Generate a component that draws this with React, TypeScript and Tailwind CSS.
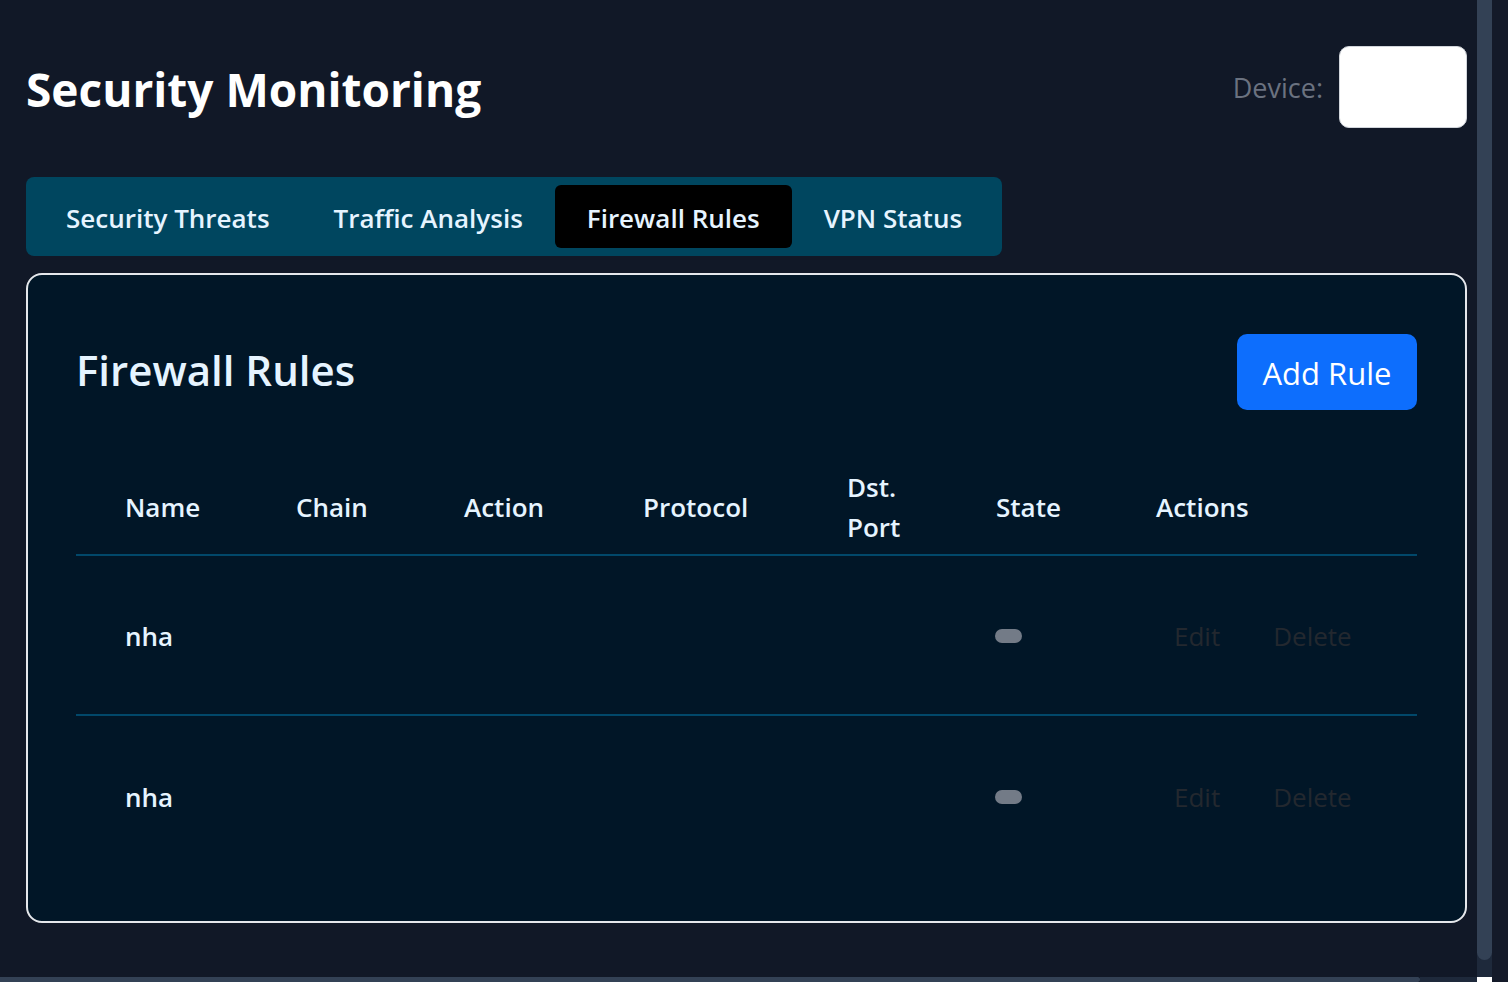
import React from "react";

const font = { fontFamily: '"Open Sans", "Noto Sans", sans-serif' };

const tabs = ["Security Threats", "Traffic Analysis", "Firewall Rules", "VPN Status"];
const cols = ["Name", "Chain", "Action", "Protocol", "Dst. Port", "State", "Actions"];
const grid = "grid grid-cols-[171px_168px_179px_204px_149px_160px_1fr]";

function Row({ last }: { last?: boolean }) {
  return (
    <div className={`${grid} h-[160px] items-center ${last ? "" : "border-b-2 border-[#01486a]"}`}>
      <div className="pl-[49px] pt-[2px] text-[26px] font-semibold text-[#e6f4ff]">nha</div>
      <div />
      <div />
      <div />
      <div />
      <div className="pl-[48px] pt-[2px]">
        <div className="h-[14px] w-[27px] rounded-full bg-[#737b87]" />
      </div>
      <div className="flex pl-[67px] pt-[2px] text-[26px] text-[#23282f]">
        <span>Edit</span>
        <span className="ml-[53px]">Delete</span>
      </div>
    </div>
  );
}

export default function App() {
  return (
    <div style={font} className="flex h-[982px] w-[1508px] overflow-hidden bg-[#111827]">
      <div className="flex w-[1477px] flex-col">
        <div className="flex-1 pl-[26px] pr-[10px] pt-[46px]">
          <div className="flex h-[82px] items-center justify-between">
            <h1 className="pt-[5px] text-[46px] font-bold text-white">Security Monitoring</h1>
            <div className="flex items-center gap-[16px]">
              <span className="pt-[3px] text-[27px] text-[#6b7280]">Device:</span>
              <div className="h-[82px] w-[128px] rounded-[10px] border border-[#d1d5db] bg-white" />
            </div>
          </div>
          <div className="mt-[49px] inline-flex h-[79px] items-center rounded-[8px] bg-[#00465f] p-[8px]">
            {tabs.map((t) => (
              <div
                key={t}
                className={`flex h-[63px] items-center rounded-[6px] px-[32px] pt-[3px] text-[26px] font-semibold text-[#e6f4ff] ${
                  t === "Firewall Rules" ? "bg-black" : ""
                }`}
              >
                {t}
              </div>
            ))}
          </div>
          <div className="mt-[17px] h-[650px] rounded-[16px] border-2 border-[#e5e7eb] bg-[#011627] px-[48px] pt-[59px]">
            <div className="flex h-[76px] items-center justify-between">
              <h2 className="pb-[5px] text-[42px] font-semibold text-[#e6f4ff]">Firewall Rules</h2>
              <button className="h-[76px] w-[180px] rounded-[10px] bg-[#0d6efd] pt-[2px] text-[31px] text-white">
                Add Rule
              </button>
            </div>
            <div className="mt-[53px]">
              <div className={`${grid} h-[93px] items-center border-b-2 border-[#01486a] pb-[3px] text-[26px] font-semibold leading-[40px] text-[#e6f4ff]`}>
                {cols.map((c) => (
                  <div key={c} className="pl-[49px]">
                    {c}
                  </div>
                ))}
              </div>
              <Row />
              <Row last />
            </div>
          </div>
        </div>
        <div className="flex h-[5px]">
          <div className="w-[1420px] rounded-r-full bg-[#334155]" />
          <div className="flex-1 bg-[#1e293b]" />
        </div>
      </div>
      <div className="flex w-[15px] flex-col bg-[#1e293b]">
        <div className="h-[960px] rounded-b-full bg-[#334155]" />
        <div className="flex-1" />
        <div className="h-[5px] bg-white" />
      </div>
      <div className="w-[16px] bg-[#141a29]" />
    </div>
  );
}
